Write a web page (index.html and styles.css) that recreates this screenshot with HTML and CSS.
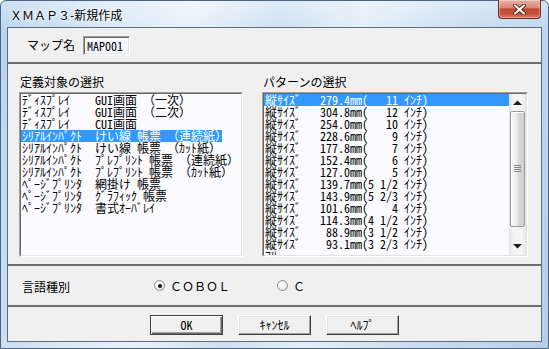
FILE: index.html
```html
<!DOCTYPE html>
<html lang="ja">
<head>
<meta charset="utf-8">
<link rel="stylesheet" href="styles.css">
</head>
<body>
<div class="window">
  <div class="titlebar">
    <span class="title">ＸＭＡＰ３-新規作成</span>
    <div class="close">
      <svg width="15" height="11" viewBox="0 0 15 11">
        <path d="M3 1.5 L12 9.5 M12 1.5 L3 9.5" stroke="#5a1e16" stroke-width="4" stroke-linecap="round"/>
        <path d="M3 1.5 L12 9.5 M12 1.5 L3 9.5" stroke="#fff" stroke-width="2.2" stroke-linecap="round"/>
      </svg>
    </div>
  </div>
  <div class="client">
    <div class="sec sec-name">
      <span class="lbl">マップ名</span>
      <div class="textbox"><span class="mono">MAP001</span></div>
    </div>
    <div class="sec sec-lists">
      <div class="col col-left">
        <div class="head">定義対象の選択</div>
        <div class="listbox">
          <div class="lb-inner mono">
            <div class="lrow"><span>ﾃﾞｨｽﾌﾟﾚｲ</span><span>GUI画面 （一次）</span></div>
            <div class="lrow"><span>ﾃﾞｨｽﾌﾟﾚｲ</span><span>GUI画面 （二次）</span></div>
            <div class="lrow"><span>ﾃﾞｨｽﾌﾟﾚｲ</span><span>CUI画面</span></div>
            <div class="lrow sel"><span>ｼﾘｱﾙｲﾝﾊﾟｸﾄ</span><span>けい線 帳票 （連続紙）</span></div>
            <div class="lrow"><span>ｼﾘｱﾙｲﾝﾊﾟｸﾄ</span><span>けい線 帳票 （ｶｯﾄ紙）</span></div>
            <div class="lrow"><span>ｼﾘｱﾙｲﾝﾊﾟｸﾄ</span><span>ﾌﾟﾚﾌﾟﾘﾝﾄ 帳票 （連続紙）</span></div>
            <div class="lrow"><span>ｼﾘｱﾙｲﾝﾊﾟｸﾄ</span><span>ﾌﾟﾚﾌﾟﾘﾝﾄ 帳票 （ｶｯﾄ紙）</span></div>
            <div class="lrow"><span>ﾍﾟｰｼﾞﾌﾟﾘﾝﾀ</span><span>網掛け 帳票</span></div>
            <div class="lrow"><span>ﾍﾟｰｼﾞﾌﾟﾘﾝﾀ</span><span>ｸﾞﾗﾌｨｯｸ 帳票</span></div>
            <div class="lrow"><span>ﾍﾟｰｼﾞﾌﾟﾘﾝﾀ</span><span>書式ｵｰﾊﾞﾚｲ</span></div>
          </div>
        </div>
      </div>
      <div class="col col-right">
        <div class="head">パターンの選択</div>
        <div class="listbox">
          <div class="lb-inner lb-scroll">
            <div class="rows mono">
              <div class="rrow sel"><span>縦ｻｲｽﾞ</span><span class="r">279.4mm(</span><span class="r">11</span><span class="u">ｲﾝﾁ)</span></div>
              <div class="rrow"><span>縦ｻｲｽﾞ</span><span class="r">304.8mm(</span><span class="r">12</span><span class="u">ｲﾝﾁ)</span></div>
              <div class="rrow"><span>縦ｻｲｽﾞ</span><span class="r">254.0mm(</span><span class="r">10</span><span class="u">ｲﾝﾁ)</span></div>
              <div class="rrow"><span>縦ｻｲｽﾞ</span><span class="r">228.6mm(</span><span class="r">9</span><span class="u">ｲﾝﾁ)</span></div>
              <div class="rrow"><span>縦ｻｲｽﾞ</span><span class="r">177.8mm(</span><span class="r">7</span><span class="u">ｲﾝﾁ)</span></div>
              <div class="rrow"><span>縦ｻｲｽﾞ</span><span class="r">152.4mm(</span><span class="r">6</span><span class="u">ｲﾝﾁ)</span></div>
              <div class="rrow"><span>縦ｻｲｽﾞ</span><span class="r">127.0mm(</span><span class="r">5</span><span class="u">ｲﾝﾁ)</span></div>
              <div class="rrow"><span>縦ｻｲｽﾞ</span><span class="r">139.7mm(</span><span class="r">5 1/2</span><span class="u">ｲﾝﾁ)</span></div>
              <div class="rrow"><span>縦ｻｲｽﾞ</span><span class="r">143.9mm(</span><span class="r">5 2/3</span><span class="u">ｲﾝﾁ)</span></div>
              <div class="rrow"><span>縦ｻｲｽﾞ</span><span class="r">101.6mm(</span><span class="r">4</span><span class="u">ｲﾝﾁ)</span></div>
              <div class="rrow"><span>縦ｻｲｽﾞ</span><span class="r">114.3mm(</span><span class="r">4 1/2</span><span class="u">ｲﾝﾁ)</span></div>
              <div class="rrow"><span>縦ｻｲｽﾞ</span><span class="r">88.9mm(</span><span class="r">3 1/2</span><span class="u">ｲﾝﾁ)</span></div>
              <div class="rrow"><span>縦ｻｲｽﾞ</span><span class="r">93.1mm(</span><span class="r">3 2/3</span><span class="u">ｲﾝﾁ)</span></div>
              <div class="rrow"><span>ﾌﾘｰ</span></div>
            </div>
            <div class="vscroll">
              <div class="sb-btn">
                <svg width="9" height="5" viewBox="0 0 9 5"><path d="M0 5 L4.5 0.5 L9 5 Z" fill="#1a1a1a"/></svg>
              </div>
              <div class="sb-track">
                <div class="sb-thumb">
                  <svg width="7" height="8" viewBox="0 0 7 8"><path d="M0 0.5H7M0 2.5H7M0 4.5H7M0 6.5H7" stroke="#8a8a8a" stroke-width="1"/></svg>
                </div>
              </div>
              <div class="sb-btn">
                <svg width="9" height="5" viewBox="0 0 9 5"><path d="M0 0 L4.5 4.5 L9 0 Z" fill="#1a1a1a"/></svg>
              </div>
            </div>
          </div>
        </div>
      </div>
    </div>
    <div class="sec sec-lang">
      <span class="lbl lang-lbl">言語種別</span>
      <div class="radio radio-cobol"><span class="rb on"></span><span class="rtext">ＣＯＢＯＬ</span></div>
      <div class="radio"><span class="rb"></span><span class="rtext">Ｃ</span></div>
    </div>
    <div class="sec sec-btns">
      <div class="btn default mono">OK</div>
      <div class="btn mono">ｷｬﾝｾﾙ</div>
      <div class="btn mono">ﾍﾙﾌﾟ</div>
    </div>
  </div>
</div>
</body>
</html>
```

FILE: styles.css
```css
* { box-sizing: border-box; }
html, body { margin: 0; padding: 0; }
body {
  width: 549px;
  height: 349px;
  overflow: hidden;
  background: #fff;
  font-family: "Noto Sans CJK JP", sans-serif;
  font-size: 12px;
  color: #000;
}
.mono {
  font-family: "Noto Sans Mono CJK JP", "Noto Sans CJK JP", monospace;
  font-size: 12px;
}
.window {
  width: 549px;
  height: 349px;
  border: 1px solid #4d6580;
  border-radius: 6px 6px 0 0;
  background:
    linear-gradient(180deg, rgba(255,255,255,0.35), rgba(255,255,255,0) 30px),
    linear-gradient(100deg, #b9d3ee 0%, #d6e7f7 18%, #e8f1fa 32%, #cde0f3 46%, #e2eef9 60%, #c9ddf2 78%, #b4cfeb 100%);
  display: flex;
  flex-direction: column;
  padding: 0 6px 6px 6px;
}
.titlebar {
  height: 26px;
  display: flex;
  align-items: flex-start;
}
.title {
  padding: 5px 0 0 3px;
  line-height: 17px;
  font-size: 12px;
  text-shadow: 0 0 6px #fff, 0 0 3px #fff;
}
.close {
  margin-left: auto;
  margin-right: 1px;
  margin-top: -1px;
  width: 43px;
  height: 19px;
  border: 1px solid #6b2a22;
  border-top: none;
  border-radius: 0 0 4px 4px;
  background: linear-gradient(180deg, #e6b0a4 0%, #d98a7a 42%, #c14a35 50%, #c4503a 75%, #dc7a60 100%);
  box-shadow: inset 0 0 0 1px rgba(255,255,255,0.35);
  display: flex;
  align-items: center;
  justify-content: center;
}
.client {
  flex: 1;
  border: 1px solid #5f6b78;
  background: #f0f0f0;
  display: flex;
  flex-direction: column;
}
.sec + .sec { border-top: 2px solid #6e6e6e; }
.sec-name {
  height: 34px;
  display: flex;
  align-items: center;
  padding-left: 19px;
  gap: 8px;
}
.lbl { line-height: 14px; }
.textbox {
  width: 47px;
  height: 19px;
  border: 1px solid;
  border-color: #a0a0a0 #fff #fff #a0a0a0;
  box-shadow: inset 1px 1px 0 #696969, inset -1px -1px 0 #e3e3e3;
  background: #f8f8ff;
  padding: 2px 0 0 3px;
  line-height: 14px;
}
.sec-lists {
  height: 202px;
  padding: 9px 0 0 11px;
  display: flex;
  gap: 19px;
}
.col-left { width: 224px; }
.col-right { width: 266px; }
.head {
  height: 19px;
  line-height: 18px;
  padding-left: 1px;
}
.listbox {
  height: 165px;
  border: 1px solid;
  border-color: #a0a0a0 #fff #fff #a0a0a0;
}
.lb-inner {
  height: 100%;
  border: 1px solid;
  border-color: #696969 #e3e3e3 #e3e3e3 #696969;
  background: #fbfbff;
}
.lrow {
  width: 201px;
  height: 12px;
  line-height: 12px;
  white-space: pre;
  padding-left: 1px;
  display: grid;
  grid-template-columns: 73px auto;
}
.sel { background: #3399ff; color: #fff; }
.lb-scroll { display: flex; }
.rows {
  flex: 1;
  clip-path: inset(-6px 0 0 0);
}
.rrow {
  height: 12px;
  line-height: 12px;
  white-space: pre;
  padding-left: 1px;
  display: grid;
  grid-template-columns: 55px 48px 30px auto;
}
.rrow .r { text-align: right; }
.rrow .u { padding-left: 6px; }
.vscroll {
  width: 17px;
  flex: none;
  display: flex;
  flex-direction: column;
  background: linear-gradient(90deg, #e2e2e2 0%, #f4f4f4 25%, #f4f4f4 75%, #e6e6e6 100%);
}
.sb-btn {
  height: 17px;
  display: flex;
  align-items: center;
  justify-content: center;
}
.sb-track {
  flex: 1;
  padding: 0 1px;
}
.sb-thumb {
  height: 116px;
  border: 1px solid #9b9b9b;
  border-radius: 2px;
  background: linear-gradient(90deg, #f6f6f6 0%, #ededed 45%, #dadada 55%, #cfcfcf 100%);
  box-shadow: inset 1px 1px 0 #fff;
  display: flex;
  align-items: center;
  justify-content: center;
}
.sec-lang {
  height: 41px;
  display: flex;
  align-items: center;
  padding-left: 14px;
}
.lang-lbl { width: 48px; margin-top: 2px; }
.radio {
  display: flex;
  align-items: center;
  gap: 5px;
}
.radio-cobol { margin-left: 84px; width: 123px; }
.rb {
  width: 11px;
  height: 11px;
  border-radius: 50%;
  border: 1px solid #8c8c8c;
  background: radial-gradient(circle at 40% 40%, #ffffff 0%, #f2f2f2 50%, #d2d2d2 100%);
  display: flex;
  align-items: center;
  justify-content: center;
}
.rb.on::after {
  content: "";
  width: 4px;
  height: 4px;
  border-radius: 50%;
  background: #111;
}
.rtext { line-height: 14px; }
.sec-btns {
  height: 36px;
  display: flex;
  justify-content: center;
  align-items: flex-start;
  padding-top: 8px;
  gap: 15px;
}
.btn {
  width: 73px;
  height: 20px;
  border: 1px solid;
  border-color: #fff #404040 #404040 #fff;
  box-shadow: inset -1px -1px 0 #a0a0a0, inset 1px 1px 0 #e3e3e3;
  background: #f0f0f0;
  display: flex;
  align-items: center;
  justify-content: center;
  line-height: 12px;
}
.btn.default {
  border-color: #404040;
  box-shadow: inset 1px 1px 0 #fff, inset -1px -1px 0 #696969, inset -2px -2px 0 #a0a0a0;
}
```
